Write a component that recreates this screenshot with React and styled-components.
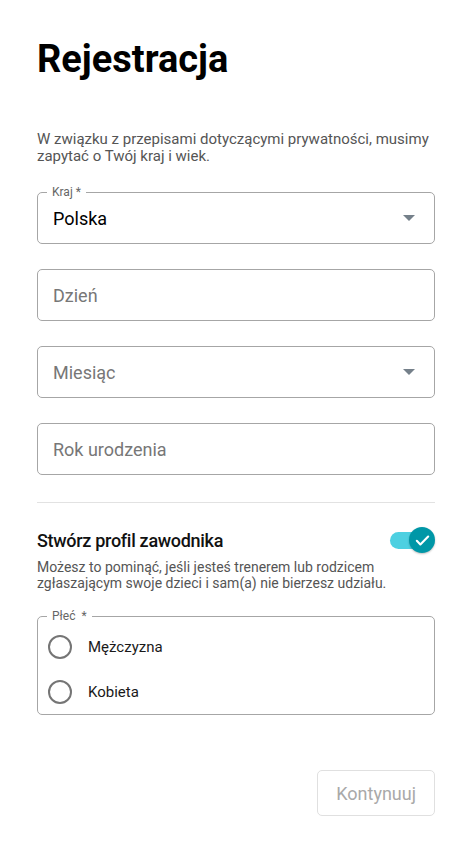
import React from 'react';
import styled, { createGlobalStyle } from 'styled-components';

const GlobalStyle = createGlobalStyle`
  body {
    margin: 0;
    background: #fff;
    font-family: Roboto, "Liberation Sans", sans-serif;
  }
`;

const Page = styled.div`
  display: flex;
  flex-direction: column;
  padding: 36px 35px 34px 37px;
`;

const Title = styled.h1`
  margin: 0;
  font-size: 38px;
  line-height: 46px;
  font-weight: 700;
  color: #000;
`;

const Intro = styled.p`
  margin: 49px 0 0;
  font-size: 15px;
  line-height: 17px;
  color: #555;
`;

const Fields = styled.div`
  display: flex;
  flex-direction: column;
  gap: 25px;
  margin-top: 27px;
`;

const Box = styled.div`
  position: relative;
  display: flex;
  align-items: center;
  height: 52px;
  padding: 0 15px;
  border: 1px solid #a6a6a6;
  border-radius: 5px;
  box-sizing: border-box;
`;

const Legend = styled.span`
  position: absolute;
  top: -9px;
  left: 9px;
  padding: 0 5px;
  background: #fff;
  font-size: 12px;
  line-height: 16px;
  color: #666;
`;

const Value = styled.span`
  flex: 1;
  font-size: 18px;
  color: ${(p) => (p.$placeholder ? '#777' : '#000')};
`;

const Caret = styled.span`
  width: 0;
  height: 0;
  margin-right: 4px;
  border-left: 6px solid transparent;
  border-right: 6px solid transparent;
  border-top: 6px solid #75808a;
`;

const Divider = styled.hr`
  margin: 27px 0 0;
  border: 0;
  border-top: 1px solid #e2e2e2;
`;

const ToggleRow = styled.div`
  display: flex;
  align-items: center;
  justify-content: space-between;
  margin-top: 24px;
`;

const ToggleTitle = styled.span`
  font-size: 18px;
  letter-spacing: -0.3px;
  font-weight: 500;
  color: #111;
`;

const Switch = styled.div`
  position: relative;
  width: 45px;
  height: 26px;
  display: flex;
  align-items: center;
`;

const Track = styled.span`
  width: 40px;
  height: 17px;
  border-radius: 9px;
  background: #4dd0e1;
`;

const Thumb = styled.span`
  position: absolute;
  right: 0;
  top: 0;
  width: 26px;
  height: 26px;
  border-radius: 50%;
  background: #0097a7;
  display: flex;
  align-items: center;
  justify-content: center;
  box-shadow: 0 1px 2px rgba(0, 0, 0, 0.25);
`;

const Hint = styled.p`
  margin: 6px 0 0;
  font-size: 14px;
  line-height: 16px;
  color: #555;
`;

const Group = styled.div`
  position: relative;
  margin-top: 25px;
  padding: 18px 10px 10px;
  border: 1px solid #a6a6a6;
  border-radius: 5px;
  display: flex;
  flex-direction: column;
  gap: 21px;
`;

const Option = styled.label`
  display: flex;
  align-items: center;
  gap: 16px;
  height: 24px;
  font-size: 15px;
  color: #1a1a1a;
`;

const Radio = styled.span`
  width: 20px;
  height: 20px;
  border: 2px solid #757575;
  border-radius: 50%;
`;

const Footer = styled.div`
  display: flex;
  justify-content: flex-end;
  margin-top: 55px;
`;

const Button = styled.button`
  height: 46px;
  padding: 0 18px;
  border: 1px solid #e0e0e0;
  border-radius: 5px;
  background: #fff;
  font-family: Roboto, "Liberation Sans", sans-serif;
  font-size: 18px;
  font-weight: 400;
  color: #a9a9a9;
`;

const Field = ({ label, value, placeholder, select }) => (
  <Box>
    {label && <Legend>{label}</Legend>}
    <Value $placeholder={placeholder}>{value}</Value>
    {select && <Caret />}
  </Box>
);

const App = () => (
  <Page>
    <GlobalStyle />
    <Title>Rejestracja</Title>
    <Intro>
      W związku z przepisami dotyczącymi prywatności, musimy zapytać o Twój kraj i wiek.
    </Intro>
    <Fields>
      <Field label="Kraj *" value="Polska" select />
      <Field value="Dzień" placeholder />
      <Field value="Miesiąc" placeholder select />
      <Field value="Rok urodzenia" placeholder />
    </Fields>
    <Divider />
    <ToggleRow>
      <ToggleTitle>Stwórz profil zawodnika</ToggleTitle>
      <Switch>
        <Track />
        <Thumb>
          <svg width="17" height="17" viewBox="0 0 24 24" fill="none">
            <path d="M4 12.5l5 5L20 6.5" stroke="#fff" strokeWidth="3" strokeLinecap="round" strokeLinejoin="round" />
          </svg>
        </Thumb>
      </Switch>
    </ToggleRow>
    <Hint>
      Możesz to pominąć, jeśli jesteś trenerem lub rodzicem zgłaszającym swoje dzieci i sam(a) nie bierzesz udziału.
    </Hint>
    <Group>
      <Legend>Płeć&nbsp; *</Legend>
      <Option><Radio />Mężczyzna</Option>
      <Option><Radio />Kobieta</Option>
    </Group>
    <Footer>
      <Button>Kontynuuj</Button>
    </Footer>
  </Page>
);

export default App;
